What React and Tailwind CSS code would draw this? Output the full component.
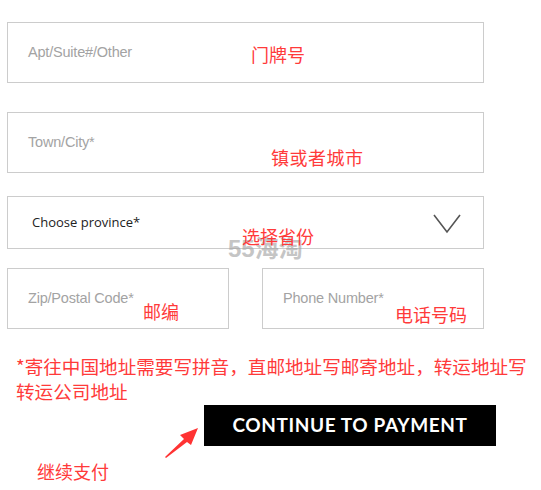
import React from 'react';

const cjk = { fontFamily: '"Noto Sans CJK SC", "Noto Sans", sans-serif' };
const arial = { fontFamily: '"Liberation Sans", Arial, sans-serif' };

function Field({ label, className = '', children }) {
  return (
    <div className={`relative flex h-[61px] items-center border border-[#cccccc] bg-white pl-[20px] ${className}`}>
      <span className="text-[14.5px] leading-none tracking-[-0.2px] text-[#a3a3a3]" style={arial}>
        {label}
      </span>
      {children}
    </div>
  );
}

function Note({ className, children }) {
  return (
    <span className={`absolute whitespace-nowrap text-[18px] leading-none text-[#ff3a3a] ${className}`} style={cjk}>
      {children}
    </span>
  );
}

export default function App() {
  return (
    <div className="min-h-[490px] w-[541px] bg-white pl-[7px] pt-[22px]">
      <div className="w-[477px]">
        <Field label="Apt/Suite#/Other">
          <Note className="left-[243px] top-[22px]">门牌号</Note>
        </Field>

        <Field label="Town/City*" className="mt-[29px]">
          <Note className="left-[263px] top-[35px] tracking-[0.5px]">镇或者城市</Note>
        </Field>

        {/* Province select */}
        <div className="relative mt-[23px] flex h-[53px] items-center justify-between border border-[#cccccc] bg-white pl-[24px] pr-[22px]">
          <span className="text-[13px] leading-none text-[#222222]" style={{ fontFamily: '"Open Sans", sans-serif' }}>
            Choose province*
          </span>
          <svg width="28" height="20" viewBox="0 0 28 20" fill="none" className="mt-[2px]">
            <path d="M1 1 L14 18 L27 1" stroke="#555555" strokeWidth="1.6" />
          </svg>
          <span
            className="absolute left-[220px] top-[40px] text-[24px] font-bold leading-none text-[#a0a0a0] opacity-60"
            style={{ fontFamily: '"Liberation Sans", "Noto Sans CJK SC", sans-serif' }}
          >
            55海淘
          </span>
          <Note className="left-[234px] top-[30px]">选择省份</Note>
        </div>

        <div className="mt-[19px] grid grid-cols-[222px_1fr] gap-[33px]">
          <Field label="Zip/Postal Code*">
            <Note className="left-[135px] top-[33px]">邮编</Note>
          </Field>
          <Field label="Phone Number*">
            <Note className="left-[132px] top-[36px]">电话号码</Note>
          </Field>
        </div>
      </div>

      <p className="mt-[24px] w-[530px] pl-[9px] text-[18.6px] leading-[25px] text-[#ff3a3a]" style={cjk}>
        *寄往中国地址需要写拼音，直邮地址写邮寄地址，转运地址写转运公司地址
      </p>

      <div className="relative mt-[2px]">
        <button
          className="ml-[197px] flex h-[41px] w-[292px] items-center justify-center bg-black text-[19px] font-bold tracking-[0.6px] text-white"
          style={{ fontFamily: 'Lato, "Open Sans", sans-serif' }}
        >
          CONTINUE TO PAYMENT
        </button>
        <svg className="absolute left-[150px] top-[20px]" width="44" height="34" viewBox="0 0 44 34">
          <path d="M8 32 L27 14 L23 10 L41 3 L34 20 L30 17 L9 33 Z" fill="#ff3333" />
        </svg>
        <p className="ml-[30px] mt-[16px] text-[18px] leading-none text-[#ff3a3a]" style={cjk}>
          继续支付
        </p>
      </div>
    </div>
  );
}
